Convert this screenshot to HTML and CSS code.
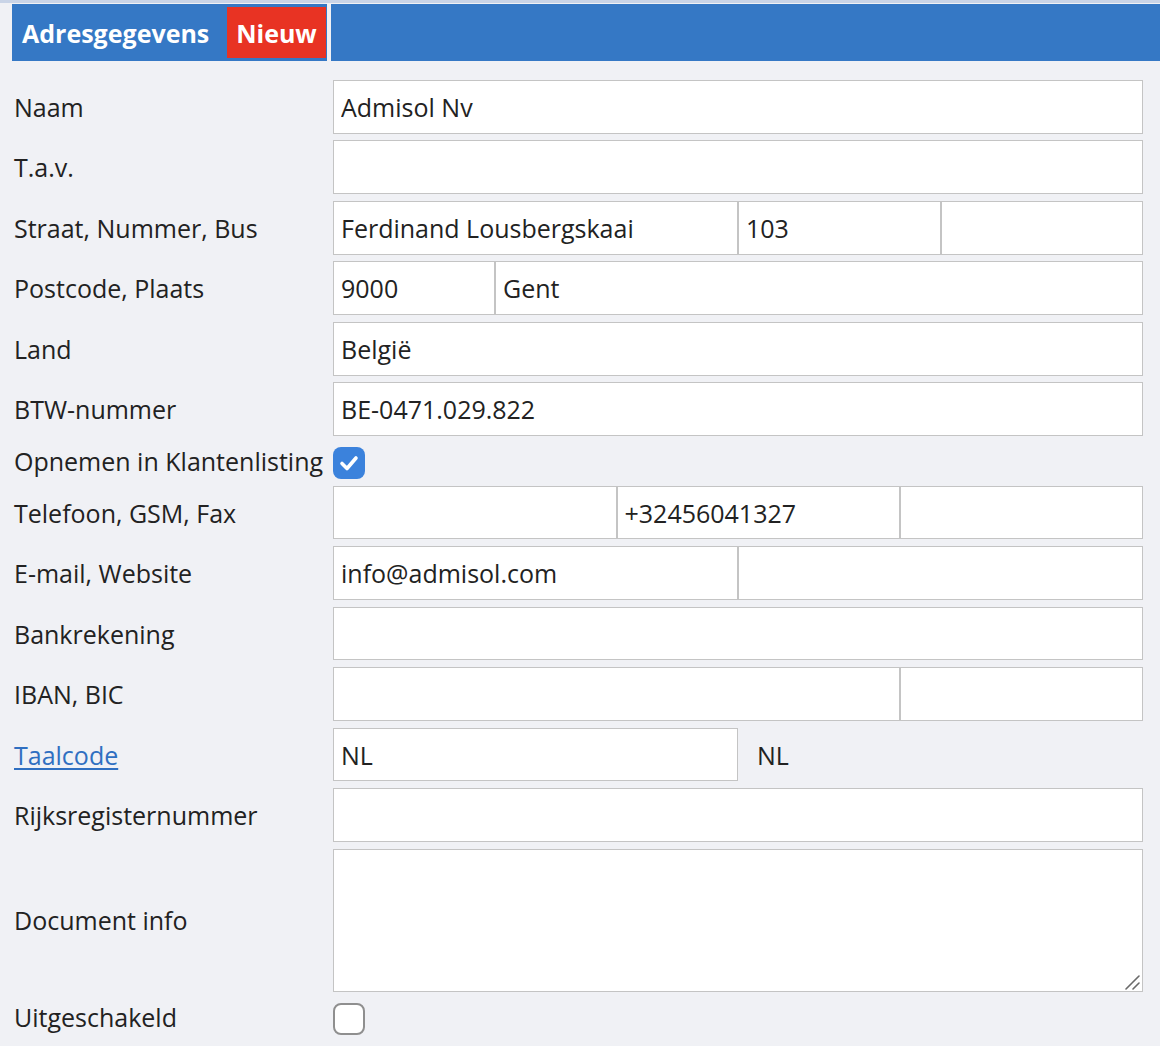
FILE: index.html
```html
<!DOCTYPE html>
<html lang="nl">
<head>
<meta charset="utf-8">
<title>Adresgegevens</title>
<link rel="stylesheet" href="styles.css">
</head>
<body>
<div class="topstrip"></div>
<div class="header">
  <div class="header-title">
    <span class="title">Adresgegevens</span>
    <span class="badge">Nieuw</span>
  </div>
  <div class="header-rest"></div>
</div>
<form class="form">
  <label class="lbl">Naam</label>
  <div class="fields"><input class="inp w100" value="Admisol Nv"></div>

  <label class="lbl">T.a.v.</label>
  <div class="fields"><input class="inp w100" value=""></div>

  <label class="lbl">Straat, Nummer, Bus</label>
  <div class="fields"><input class="inp w50" value="Ferdinand Lousbergskaai"><input class="inp w25" value="103"><input class="inp w25" value=""></div>

  <label class="lbl">Postcode, Plaats</label>
  <div class="fields"><input class="inp w20" value="9000"><input class="inp w80" value="Gent"></div>

  <label class="lbl">Land</label>
  <div class="fields"><input class="inp w100" value="België"></div>

  <label class="lbl">BTW-nummer</label>
  <div class="fields"><input class="inp w100" value="BE-0471.029.822"></div>

  <label class="lbl short">Opnemen in Klantenlisting</label>
  <div class="fields short"><span class="cb checked"><svg viewBox="0 0 32 32" width="32" height="32"><path d="M9 16.5 L14 21.5 L23 11" fill="none" stroke="#fff" stroke-width="3.6" stroke-linecap="round" stroke-linejoin="round"/></svg></span></div>

  <label class="lbl">Telefoon, GSM, Fax</label>
  <div class="fields"><input class="inp w35" value=""><input class="inp w35" value="+32456041327"><input class="inp w30" value=""></div>

  <label class="lbl">E-mail, Website</label>
  <div class="fields"><input class="inp w50" value="info@admisol.com"><input class="inp w50" value=""></div>

  <label class="lbl">Bankrekening</label>
  <div class="fields"><input class="inp w100" value=""></div>

  <label class="lbl">IBAN, BIC</label>
  <div class="fields"><input class="inp w70" value=""><input class="inp w30" value=""></div>

  <label class="lbl"><a class="link" href="#">Taalcode</a></label>
  <div class="fields"><input class="inp w50" value="NL"><span class="aside">NL</span></div>

  <label class="lbl">Rijksregisternummer</label>
  <div class="fields"><input class="inp w100" value=""></div>

  <label class="lbl">Document info</label>
  <div class="fields ta-wrap"><textarea class="ta"></textarea><svg class="grip" viewBox="0 0 16 16" width="16" height="16"><path d="M2 15 L15 2 M9 15 L15 9" stroke="#6a6a6a" stroke-width="1.6" stroke-linecap="round" fill="none"/></svg></div>

  <label class="lbl short">Uitgeschakeld</label>
  <div class="fields short"><span class="cb"></span></div>
</form>
</body>
</html>
```
FILE: styles.css
```css
html, body {
  margin: 0;
  padding: 0;
  background: #f0f1f5;
  font-family: "Open Sans", "Noto Sans", sans-serif;
  color: #222;
  overflow: hidden;
}
.topstrip {
  height: 3px;
  background: #c9d4e7;
}
.header {
  display: flex;
  margin: 1px 0 0 12px;
  height: 57px;
  gap: 4px;
}
.header-title {
  width: 315px;
  background: #3578c5;
  display: flex;
  align-items: center;
  justify-content: space-between;
  padding: 3px 1px 3px 10px;
  box-sizing: border-box;
}
.title {
  color: #fff;
  font-weight: 700;
  font-size: 25px;
}
.badge {
  background: #e83323;
  color: #fff;
  font-weight: 700;
  font-size: 25px;
  align-self: stretch;
  width: 99px;
  display: flex;
  align-items: center;
  justify-content: center;
}
.header-rest {
  flex: 1;
  background: #3578c5;
}
.form {
  display: grid;
  grid-template-columns: 321px 810px;
  row-gap: 6.9px;
  margin: 19px 0 0 12px;
}
.lbl {
  font-size: 25px;
  padding-left: 2px;
  display: flex;
  align-items: center;
  white-space: nowrap;
  line-height: 36px;
}
.fields {
  display: flex;
  align-items: center;
  min-height: 53.6px;
}
.fields.short {
  min-height: 36px;
  align-items: flex-start;
}
.inp {
  height: 53.6px;
  box-sizing: border-box;
  border: 1px solid #c4c4c4;
  background: #fff;
  font-family: inherit;
  font-size: 25px;
  color: #222;
  padding: 0 7px;
  margin: 0;
  outline: none;
  border-radius: 0;
  min-width: 0;
}
.w100 { width: 100%; }
.w80 { width: 80%; }
.w70 { width: 70%; }
.w50 { width: 50%; }
.w35 { width: 35%; }
.w30 { width: 30%; }
.w25 { width: 25%; }
.w20 { width: 20%; }
.aside {
  font-size: 25px;
  margin-left: 19px;
}
.link {
  color: #2f6fc1;
  text-decoration: underline;
  text-underline-offset: 3px;
}
.ta-wrap {
  position: relative;
}
.ta {
  width: 100%;
  height: 143px;
  box-sizing: border-box;
  border: 1px solid #c4c4c4;
  background: #fff;
  font-family: inherit;
  font-size: 25px;
  margin: 0;
  padding: 7px;
  resize: none;
  display: block;
  border-radius: 0;
}
.grip {
  position: absolute;
  right: 3px;
  bottom: 2px;
}
.cb {
  width: 32px;
  height: 32px;
  box-sizing: border-box;
  border-radius: 8px;
  background: #fff;
  border: 2px solid #8f8f8f;
  margin-top: 4px;
  display: block;
}
.cb.checked {
  background: #3b82dc;
  border: none;
}
.cb svg {
  display: block;
}
```
